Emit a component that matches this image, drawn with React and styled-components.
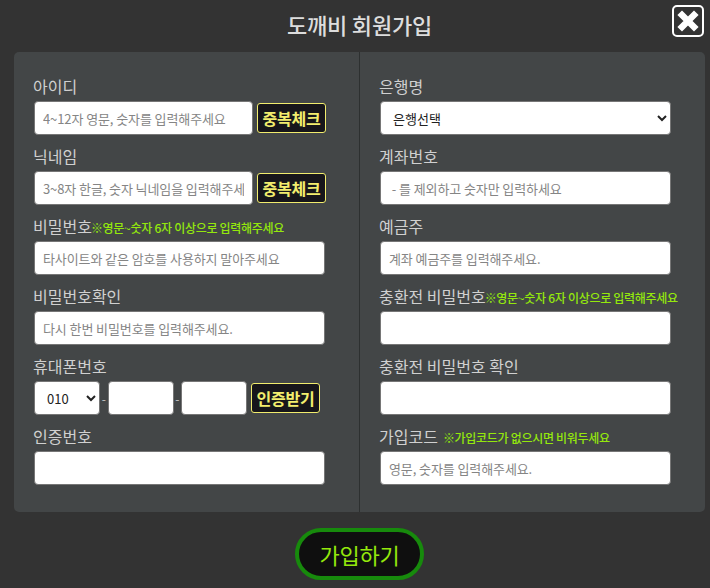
import React from 'react'
import styled, { createGlobalStyle } from 'styled-components'

const GlobalStyle = createGlobalStyle`
  html, body {
    margin: 0;
    padding: 0;
    background: #333333;
  }
  * {
    box-sizing: border-box;
    font-family: "Noto Sans CJK KR", "Noto Sans", sans-serif;
  }
`

const Modal = styled.div`
  width: 710px;
  height: 588px;
  overflow: hidden;
  padding: 0 5px 0 14px;
  background: #333333;
`

const Header = styled.header`
  position: relative;
  height: 52px;
  display: flex;
  align-items: center;
  justify-content: center;
`

const Title = styled.h1`
  margin: 0 0 4px;
  font-size: 22px;
  line-height: 30px;
  font-weight: 500;
  letter-spacing: -0.2px;
  color: #dddddd;
`

const CloseButton = styled.button`
  position: absolute;
  right: 1px;
  top: 5px;
  width: 32px;
  height: 32px;
  padding: 0;
  display: flex;
  align-items: center;
  justify-content: center;
  border: 2px solid #ffffff;
  border-radius: 5px;
  background: #333333;
`

const Panel = styled.div`
  height: 460px;
  display: grid;
  grid-template-columns: 346px 345px;
  background: #434647;
  border-radius: 5px;
`

const Column = styled.div`
  padding: 14px 0 0 20px;
  border-right: ${p => p.$right ? 'none' : '1px solid #2d3030'};
`

const Field = styled.div`
  height: 70px;
`

const LabelRow = styled.div`
  height: 35px;
  padding-top: 5px;
  display: flex;
  align-items: center;
  white-space: nowrap;
`

const Label = styled.label`
  margin-left: -1px;
  font-size: 16px;
  font-weight: 400;
  color: #d0d0d0;
`

const Hint = styled.span`
  margin-left: ${p => p.$gap || -1}px;
  font-size: 12px;
  font-weight: 500;
  letter-spacing: -0.3px;
  color: #94e80c;
  padding-top: 2px;
`

const Line = styled.div`
  display: flex;
  align-items: center;
`

const Input = styled.input`
  width: ${p => p.$w || 291}px;
  height: 34px;
  padding: 0 8px;
  border: 1px solid #767676;
  border-radius: 4px;
  background: #ffffff;
  font-size: 13px;
  letter-spacing: -0.1px;
  color: #333333;
  &::placeholder {
    color: #858585;
    opacity: 1;
  }
`

const Select = styled.select`
  width: ${p => p.$w || 291}px;
  height: 34px;
  padding: 0 8px;
  border: 1px solid #767676;
  border-radius: 4px;
  background-color: #ffffff;
  font-size: 13px;
  color: #222222;
`

const Dash = styled.span`
  width: 7.5px;
  text-align: center;
  font-size: 12px;
  color: #c8c8c8;
`

const CheckButton = styled.button`
  width: 69px;
  height: 30px;
  margin-left: 4px;
  padding: 0;
  border: 1px solid #f1ec6d;
  border-radius: 3px;
  background: #17161b;
  font-size: 16px;
  font-weight: 700;
  letter-spacing: -0.2px;
  white-space: nowrap;
  color: #f3ee6e;
`

const Footer = styled.div`
  display: flex;
  justify-content: center;
  padding-top: 16px;
`

const SubmitButton = styled.button`
  width: 129px;
  height: 52px;
  padding: 0;
  border: 4px solid #178a0c;
  border-radius: 26px;
  background: #0f0f0f;
  font-size: 22px;
  letter-spacing: -0.3px;
  color: #94e80c;
`

const App = () => (
  <Modal>
    <GlobalStyle />
    <Header>
      <Title>도깨비 회원가입</Title>
      <CloseButton aria-label="닫기">
        <svg width="22" height="22" viewBox="0 0 22 22">
          <path d="M5 5 L17 17 M17 5 L5 17" stroke="#fff" strokeWidth="6.5" strokeLinecap="square" />
        </svg>
      </CloseButton>
    </Header>
    <Panel>
      <Column>
        <Field>
          <LabelRow><Label>아이디</Label></LabelRow>
          <Line>
            <Input $w={219} placeholder="4~12자 영문, 숫자를 입력해주세요" />
            <CheckButton>중복체크</CheckButton>
          </Line>
        </Field>
        <Field>
          <LabelRow><Label>닉네임</Label></LabelRow>
          <Line>
            <Input $w={219} placeholder="3~8자 한글, 숫자 닉네임을 입력해주세요" />
            <CheckButton>중복체크</CheckButton>
          </Line>
        </Field>
        <Field>
          <LabelRow><Label>비밀번호</Label><Hint>※영문~숫자 6자 이상으로 입력해주세요</Hint></LabelRow>
          <Input placeholder="타사이트와 같은 암호를 사용하지 말아주세요" />
        </Field>
        <Field>
          <LabelRow><Label>비밀번호확인</Label></LabelRow>
          <Input placeholder="다시 한번 비밀번호를 입력해주세요." />
        </Field>
        <Field>
          <LabelRow><Label>휴대폰번호</Label></LabelRow>
          <Line>
            <Select $w={66} defaultValue="010">
              <option>010</option>
              <option>011</option>
            </Select>
            <Dash>-</Dash>
            <Input $w={66} />
            <Dash>-</Dash>
            <Input $w={66} />
            <CheckButton>인증받기</CheckButton>
          </Line>
        </Field>
        <Field>
          <LabelRow><Label>인증번호</Label></LabelRow>
          <Input />
        </Field>
      </Column>
      <Column $right>
        <Field>
          <LabelRow><Label>은행명</Label></LabelRow>
          <Select defaultValue="">
            <option value="">은행선택</option>
          </Select>
        </Field>
        <Field>
          <LabelRow><Label>계좌번호</Label></LabelRow>
          <Input placeholder=" - 를 제외하고 숫자만 입력하세요" />
        </Field>
        <Field>
          <LabelRow><Label>예금주</Label></LabelRow>
          <Input placeholder="계좌 예금주를 입력해주세요." />
        </Field>
        <Field>
          <LabelRow><Label>충환전 비밀번호</Label><Hint>※영문~숫자 6자 이상으로 입력해주세요</Hint></LabelRow>
          <Input />
        </Field>
        <Field>
          <LabelRow><Label>충환전 비밀번호 확인</Label></LabelRow>
          <Input />
        </Field>
        <Field>
          <LabelRow><Label>가입코드</Label><Hint $gap={5}>※가입코드가 없으시면 비워두세요</Hint></LabelRow>
          <Input placeholder="영문, 숫자를 입력해주세요." />
        </Field>
      </Column>
    </Panel>
    <Footer>
      <SubmitButton>가입하기</SubmitButton>
    </Footer>
  </Modal>
)

export default App
